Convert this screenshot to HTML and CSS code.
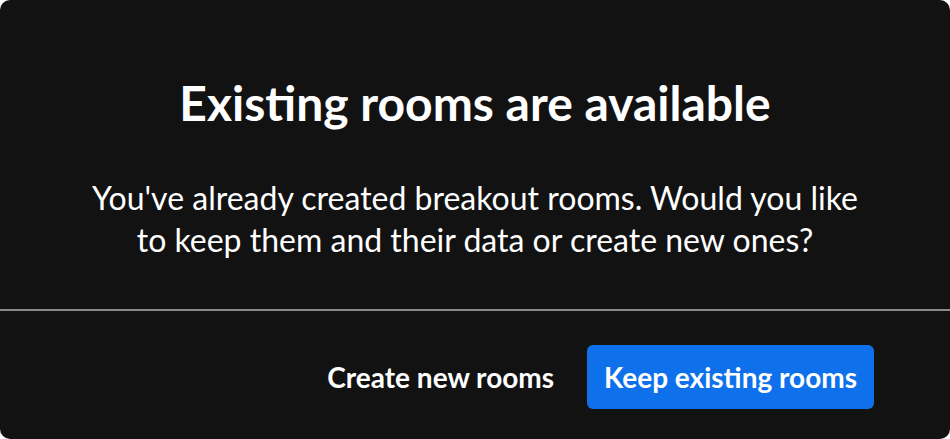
FILE: index.html
```html
<!DOCTYPE html>
<html lang="en">
<head>
    <meta charset="UTF-8">
    <meta name="viewport" content="width=device-width, initial-scale=1.0">
    <title>Existing rooms are available</title>

    <link rel="stylesheet" href="styles.css">
</head>

<body>
    <div class="dialog">
        <div class="dialog_body">
            <h2 class="dialog_title">Existing rooms are available</h2>
            <p class="dialog_text">You've already created breakout rooms. Would you like to keep them and their data or create new ones?</p>
        </div>
        <div class="dialog_footer">
            <button class="btn btn_plain">Create new rooms</button>
            <button class="btn btn_primary">Keep existing rooms</button>
        </div>
    </div>
</body>

</html>
```

FILE: styles.css
```css
body {
    margin: 0;
    background-color: #ffffff;
    font-family: Lato, "Open Sans", sans-serif;
}

.dialog {
    height: 439px;
    box-sizing: border-box;
    background-color: #121212;
    border-radius: 10px;
    color: #ffffff;
    display: flex;
    flex-direction: column;
}

.dialog_body {
    flex: 1;
    padding: 75px 80px 0;
    text-align: center;
}

.dialog_title {
    margin: 0;
    font-size: 48px;
    font-weight: 700;
    line-height: 56px;
}

.dialog_text {
    margin: 46px auto 0;
    max-width: 780px;
    font-size: 32px;
    line-height: 42px;
}

.dialog_footer {
    border-top: 2px solid #8a8a8a;
    display: flex;
    justify-content: flex-end;
    gap: 16px;
    padding: 34px 76px 30px;
}

.btn {
    font-family: inherit;
    font-size: 28px;
    font-weight: 700;
    color: #ffffff;
    height: 64px;
    padding: 0 17px;
    border: none;
    border-radius: 6px;
    background: none;
}

.btn_primary {
    background-color: #0e71eb;
}
```
